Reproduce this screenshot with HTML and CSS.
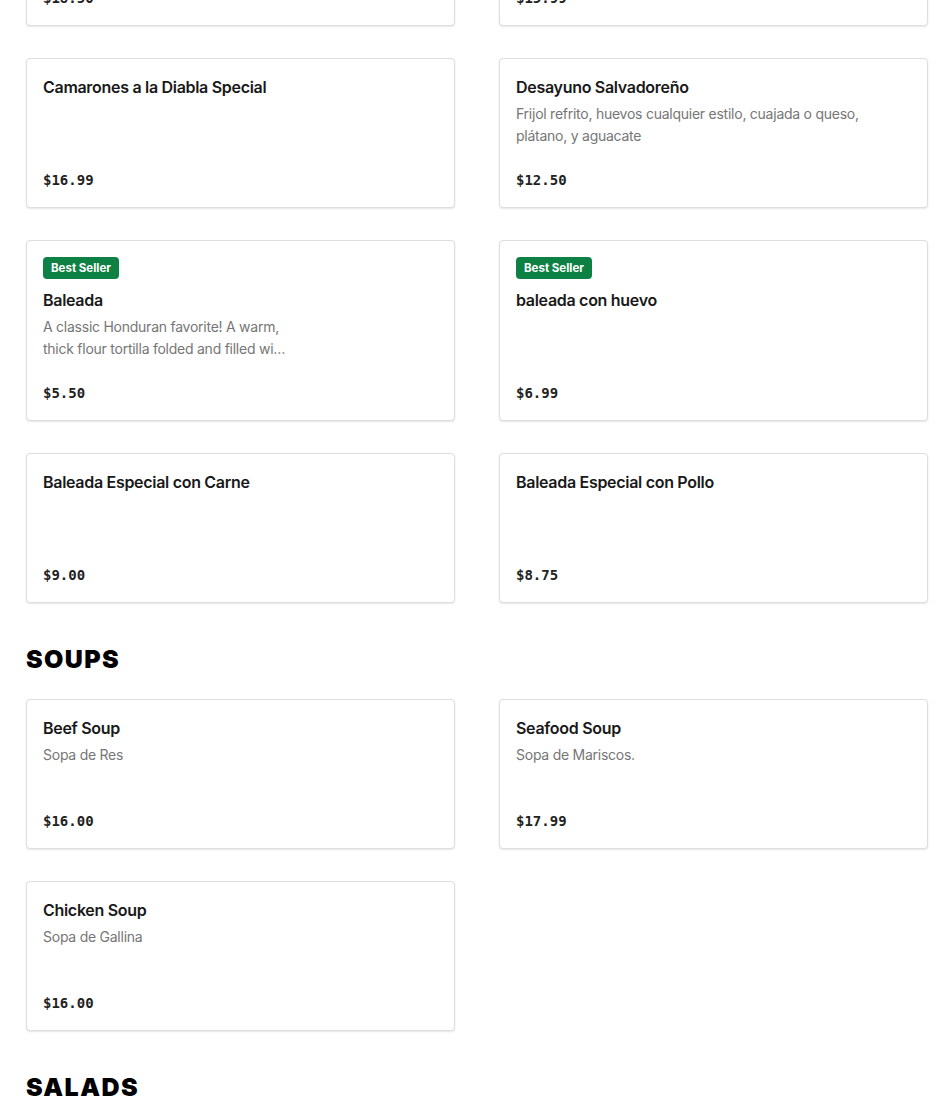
FILE: index.html
```html
<!DOCTYPE html>
<html lang="en">
<head>
<meta charset="utf-8">
<title>Menu</title>
<link rel="stylesheet" href="styles.css">
</head>
<body>
<main class="menu">
  <section class="section section-scrolled">
    <div class="grid">
      <article class="card">
        <h3 class="title">Camarones Especiales</h3>
        <p class="price">$18.50</p>
      </article>
      <article class="card">
        <h3 class="title">Pescado Frito</h3>
        <p class="price">$15.99</p>
      </article>
      <article class="card">
        <h3 class="title">Camarones a la Diabla Special</h3>
        <p class="price">$16.99</p>
      </article>
      <article class="card">
        <h3 class="title">Desayuno Salvadoreño</h3>
        <p class="desc">Frijol refrito, huevos cualquier estilo, cuajada o queso, plátano, y aguacate</p>
        <p class="price">$12.50</p>
      </article>
      <article class="card">
        <span class="badge">Best Seller</span>
        <h3 class="title">Baleada</h3>
        <p class="desc desc-narrow">A classic Honduran favorite! A warm, thick flour tortilla folded and filled with refried beans, cheese and cream.</p>
        <p class="price">$5.50</p>
      </article>
      <article class="card">
        <span class="badge">Best Seller</span>
        <h3 class="title">baleada con huevo</h3>
        <p class="price">$6.99</p>
      </article>
      <article class="card">
        <h3 class="title">Baleada Especial con Carne</h3>
        <p class="price">$9.00</p>
      </article>
      <article class="card">
        <h3 class="title">Baleada Especial con Pollo</h3>
        <p class="price">$8.75</p>
      </article>
    </div>
  </section>

  <section class="section">
    <h2 class="heading">SOUPS</h2>
    <div class="grid">
      <article class="card">
        <h3 class="title">Beef Soup</h3>
        <p class="desc">Sopa de Res</p>
        <p class="price">$16.00</p>
      </article>
      <article class="card">
        <h3 class="title">Seafood Soup</h3>
        <p class="desc">Sopa de Mariscos.</p>
        <p class="price">$17.99</p>
      </article>
      <article class="card">
        <h3 class="title">Chicken Soup</h3>
        <p class="desc">Sopa de Gallina</p>
        <p class="price">$16.00</p>
      </article>
    </div>
  </section>

  <section class="section">
    <h2 class="heading">SALADS</h2>
  </section>
</main>
</body>
</html>
```
FILE: styles.css
```css
* { box-sizing: border-box; }

html, body {
  margin: 0;
  padding: 0;
  background: #ffffff;
  overflow: hidden;
}

body {
  font-family: "Inter", "Liberation Sans", Arial, sans-serif;
  color: #191919;
}

.menu {
  padding: 0 22px 0 26px;
}

.section-scrolled {
  margin-top: -124px;
}

.section + .section {
  margin-top: 40px;
}

.heading {
  margin: 0 0 24px;
  height: 32px;
  line-height: 32px;
  font-family: "Inter", "Liberation Sans", sans-serif;
  font-weight: 900;
  font-size: 25px;
  letter-spacing: 1.4px;
  color: #000;
}

.grid {
  display: grid;
  grid-template-columns: 1fr 1fr;
  column-gap: 44px;
  row-gap: 32px;
}

.card {
  display: flex;
  flex-direction: column;
  align-items: flex-start;
  min-height: 150px;
  padding: 16px 16px 15px;
  background: #fff;
  border: 1px solid #dedede;
  border-radius: 4px;
  box-shadow: 0 1px 2px rgba(0, 0, 0, 0.10);
}

.badge {
  display: inline-block;
  height: 22px;
  line-height: 22px;
  padding: 0 8px;
  margin-bottom: 9px;
  background: #0d8143;
  color: #fff;
  font-family: "Inter", "Liberation Sans", sans-serif;
  font-size: 11.5px;
  font-weight: 700;
  border-radius: 4px;
}

.title {
  margin: 0;
  height: 24px;
  font-family: "Inter", "Liberation Sans", sans-serif;
  font-size: 16px;
  line-height: 24px;
  font-weight: 600;
  letter-spacing: -0.3px;
  color: #191919;
}

.desc {
  margin: 4px 0 0;
  font-family: "Inter", "Liberation Sans", sans-serif;
  font-size: 14px;
  line-height: 22px;
  letter-spacing: -0.25px;
  color: #767676;
  display: -webkit-box;
  -webkit-box-orient: vertical;
  -webkit-line-clamp: 2;
  overflow: hidden;
}

.desc-narrow {
  max-width: 246px;
}

.price {
  margin: auto 0 0;
  padding-top: 21px;
  font-family: "DejaVu Sans Mono", "Liberation Mono", monospace;
  font-size: 14px;
  line-height: 24px;
  font-weight: 700;
  color: #222;
}
```
